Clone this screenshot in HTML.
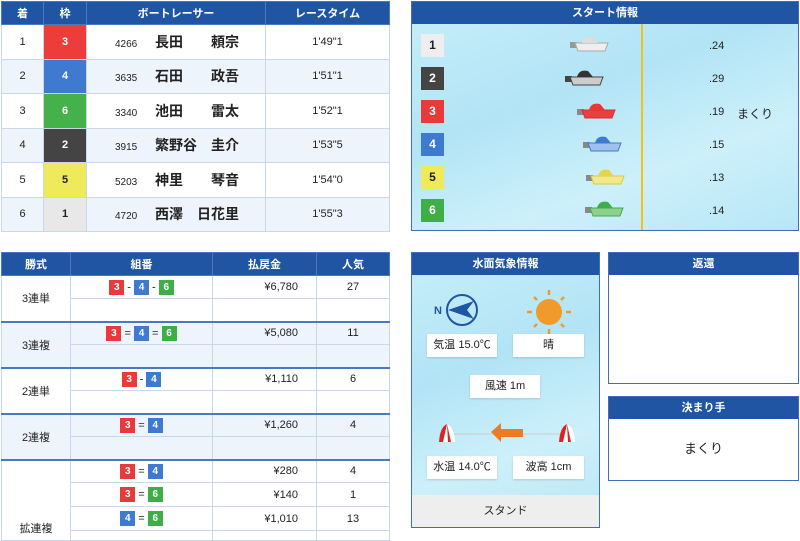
<!DOCTYPE html>
<html><head><meta charset="utf-8"><style>
*{margin:0;padding:0;box-sizing:border-box}
body{width:800px;height:530px;background:#fff;position:relative;overflow:hidden;font-family:"Liberation Sans","Noto Sans CJK JP",sans-serif;color:#222}
.a{position:absolute}
.hd{background:#1f55a3;color:#fff;font-weight:bold;font-size:11px;text-align:center;line-height:22px}
table{border-collapse:collapse;position:absolute;table-layout:fixed}
td,th{text-align:center;font-size:11px;border:1px solid #c9d7ea}
th{background:#1f55a3;color:#fff;border-color:#4a79c0;height:23px;font-size:11px}
.n{font-size:14px;font-weight:bold;font-family:"Noto Sans CJK JP",sans-serif}
.b{display:inline-block;width:15px;height:15px;line-height:15px;color:#fff;font-weight:bold;font-size:10px;text-align:center;vertical-align:middle}
.r{background:#e83a3a}.bl{background:#3d7ad0}.g{background:#3fae48}
.water{background:linear-gradient(160deg,#c7eef9,#b2e4f6 40%,#cdf0fa 70%,#b8e6f6)}
.sq{position:absolute;left:9px;width:23px;height:23px;font-weight:bold;font-size:12px;text-align:center;line-height:23px}
.t{position:absolute;left:297px;font-size:11px}
.box{position:absolute;background:#fff;font-size:11px;text-align:center;line-height:23px;height:23px;box-shadow:0 1px 2px rgba(0,0,0,.15)}
</style></head><body>

<table style="left:1px;top:1px;width:388px;border:1px solid #3f6eb5">
<colgroup><col style="width:42px"><col style="width:43px"><col style="width:179px"><col style="width:124px"></colgroup>
<tr><th>着</th><th>枠</th><th>ボートレーサー</th><th>レースタイム</th></tr>
<tr style="height:34.5px"><td>1</td><td style="background:#ec3c3c;color:#fff;font-weight:bold">3</td><td style="text-align:left;padding-left:28px"><span style="font-size:10px;display:inline-block;width:40px">4266</span><span class="n">長田　　頼宗</span></td><td>1'49"1</td></tr>
<tr style="height:34.5px;background:#eef4fc"><td>2</td><td style="background:#3d7ad0;color:#fff;font-weight:bold">4</td><td style="text-align:left;padding-left:28px"><span style="font-size:10px;display:inline-block;width:40px">3635</span><span class="n">石田　　政吾</span></td><td>1'51"1</td></tr>
<tr style="height:34.5px"><td>3</td><td style="background:#45b14a;color:#fff;font-weight:bold">6</td><td style="text-align:left;padding-left:28px"><span style="font-size:10px;display:inline-block;width:40px">3340</span><span class="n">池田　　雷太</span></td><td>1'52"1</td></tr>
<tr style="height:34.5px;background:#eef4fc"><td>4</td><td style="background:#444;color:#fff;font-weight:bold">2</td><td style="text-align:left;padding-left:28px"><span style="font-size:10px;display:inline-block;width:40px">3915</span><span class="n">繁野谷　圭介</span></td><td>1'53"5</td></tr>
<tr style="height:34.5px"><td>5</td><td style="background:#eeea5a;font-weight:bold">5</td><td style="text-align:left;padding-left:28px"><span style="font-size:10px;display:inline-block;width:40px">5203</span><span class="n">神里　　琴音</span></td><td>1'54"0</td></tr>
<tr style="height:34.5px;background:#eef4fc"><td>6</td><td style="background:#e8e8e8;font-weight:bold">1</td><td style="text-align:left;padding-left:28px"><span style="font-size:10px;display:inline-block;width:40px">4720</span><span class="n">西澤　日花里</span></td><td>1'55"3</td></tr>
</table>

<div class="a water" style="left:411px;top:1px;width:388px;height:230px;border:1px solid #3f6eb5">
<div class="hd" style="height:22px">スタート情報</div>
<div class="a" style="left:229px;top:22px;width:2px;height:206px;background:#f2c21c"></div>
<div class="sq" style="top:32px;background:#eee">1</div>
<div class="sq" style="top:65px;background:#444;color:#fff">2</div>
<div class="sq" style="top:98px;background:#e83a3a;color:#fff">3</div>
<div class="sq" style="top:131px;background:#3d7ad0;color:#fff">4</div>
<div class="sq" style="top:164px;background:#eeea5a">5</div>
<div class="sq" style="top:197px;background:#3fae48;color:#fff">6</div>
<div class="t" style="top:38px">.24</div>
<div class="t" style="top:71px">.29</div>
<div class="t" style="top:104px">.19</div><div class="a" style="left:325px;top:103px;font-size:12px">まくり</div>
<div class="t" style="top:137px">.15</div>
<div class="t" style="top:170px">.13</div>
<div class="t" style="top:203px">.14</div>
<svg class="a" style="left:0;top:0" width="388" height="230">
<g transform="translate(158,33)"><rect x="0" y="7" width="7" height="6" fill="#999"/><path d="M5 8 L38 8 L35 16 L8 16 Z" fill="#eee" stroke="#aaa"/><path d="M12 8 Q14 0 23 2 L28 8Z" fill="#ddd"/></g>
<g transform="translate(153,67)"><rect x="0" y="7" width="7" height="6" fill="#444"/><path d="M5 8 L38 8 L35 16 L8 16 Z" fill="#ccc" stroke="#444"/><path d="M12 8 Q14 0 23 2 L28 8Z" fill="#333"/></g>
<g transform="translate(165,100)"><rect x="0" y="7" width="7" height="6" fill="#888"/><path d="M5 8 L38 8 L35 16 L8 16 Z" fill="#e84040" stroke="#c33"/><path d="M12 8 Q14 0 23 2 L28 8Z" fill="#e33"/></g>
<g transform="translate(171,133)"><rect x="0" y="7" width="7" height="6" fill="#888"/><path d="M5 8 L38 8 L35 16 L8 16 Z" fill="#9fc0ea" stroke="#3d7ad0"/><path d="M12 8 Q14 0 23 2 L28 8Z" fill="#3d7ad0"/></g>
<g transform="translate(174,166)"><rect x="0" y="7" width="7" height="6" fill="#888"/><path d="M5 8 L38 8 L35 16 L8 16 Z" fill="#f2ea8a" stroke="#d8c84a"/><path d="M12 8 Q14 0 23 2 L28 8Z" fill="#e6d44a"/></g>
<g transform="translate(173,198)"><rect x="0" y="7" width="7" height="6" fill="#888"/><path d="M5 8 L38 8 L35 16 L8 16 Z" fill="#8fd08f" stroke="#3fae48"/><path d="M12 8 Q14 0 23 2 L28 8Z" fill="#3fae48"/></g>
</svg>
</div>

<table style="left:1px;top:252px;width:388px;border:1px solid #3f6eb5">
<colgroup><col style="width:69px"><col style="width:142px"><col style="width:104px"><col style="width:73px"></colgroup>
<tr><th style="height:22px">勝式</th><th>組番</th><th>払戻金</th><th>人気</th></tr>
<tr style="height:23px"><td rowspan="2">3連単</td><td><span class="b r">3</span> - <span class="b bl">4</span> - <span class="b g">6</span></td><td style="text-align:right;padding-right:18px">¥6,780</td><td>27</td></tr>
<tr style="height:23px"><td></td><td></td><td></td></tr>
<tr style="height:23px;background:#eef4fc;border-top:2px solid #4a79c0"><td rowspan="2">3連複</td><td><span class="b r">3</span> = <span class="b bl">4</span> = <span class="b g">6</span></td><td style="text-align:right;padding-right:18px">¥5,080</td><td>11</td></tr>
<tr style="height:23px;background:#eef4fc"><td></td><td></td><td></td></tr>
<tr style="height:23px;border-top:2px solid #4a79c0"><td rowspan="2">2連単</td><td><span class="b r">3</span> - <span class="b bl">4</span></td><td style="text-align:right;padding-right:18px">¥1,110</td><td>6</td></tr>
<tr style="height:23px"><td></td><td></td><td></td></tr>
<tr style="height:23px;background:#eef4fc;border-top:2px solid #4a79c0"><td rowspan="2">2連複</td><td><span class="b r">3</span> = <span class="b bl">4</span></td><td style="text-align:right;padding-right:18px">¥1,260</td><td>4</td></tr>
<tr style="height:23px;background:#eef4fc"><td></td><td></td><td></td></tr>
<tr style="height:23px;border-top:2px solid #4a79c0"><td rowspan="4" style="vertical-align:bottom;padding-bottom:4px">拡連複</td><td><span class="b r">3</span> = <span class="b bl">4</span></td><td style="text-align:right;padding-right:18px">¥280</td><td>4</td></tr>
<tr style="height:24px"><td><span class="b r">3</span> = <span class="b g">6</span></td><td style="text-align:right;padding-right:18px">¥140</td><td>1</td></tr>
<tr style="height:24px"><td><span class="b bl">4</span> = <span class="b g">6</span></td><td style="text-align:right;padding-right:18px">¥1,010</td><td>13</td></tr>
<tr style="height:10px"><td></td><td></td><td></td></tr>
</table>

<div class="a water" style="left:411px;top:252px;width:189px;height:276px;border:1px solid #3f6eb5">
<div class="hd" style="height:22px">水面気象情報</div>
<svg class="a" style="left:0;top:22px" width="187" height="230">
<text x="22" y="39" font-size="11" font-weight="bold" fill="#1f55a3" font-family="Liberation Sans">N</text>
<circle cx="50" cy="35" r="15" fill="none" stroke="#1f55a3" stroke-width="2"/>
<path d="M36 35 L62 26 L55 35 L62 44 Z" fill="#1f55a3"/>
<circle cx="137" cy="37" r="13" fill="#ef9a2a"/>
<g stroke="#ef9a2a" stroke-width="2.5">
<line x1="137" y1="15" x2="137" y2="20"/><line x1="137" y1="54" x2="137" y2="59"/>
<line x1="115" y1="37" x2="120" y2="37"/><line x1="154" y1="37" x2="159" y2="37"/>
<line x1="122" y1="22" x2="125" y2="25"/><line x1="149" y1="49" x2="152" y2="52"/>
<line x1="152" y1="22" x2="149" y2="25"/><line x1="122" y1="52" x2="125" y2="49"/>
</g>
<line x1="40" y1="159" x2="148" y2="159" stroke="#ccc" stroke-width="1"/>
<path d="M27 167 Q28 152 35 149 Q42 152 43 167 Z" fill="#fff"/><path d="M27 167 Q28 152 35 149 L31 167Z M35 149 L36 167 L39 167Z" fill="#d22"/>
<path d="M147 167 Q148 152 155 149 Q162 152 163 167 Z" fill="#fff"/><path d="M147 167 Q148 152 155 149 L151 167Z M155 149 L156 167 L159 167Z" fill="#d22"/>
<path d="M79 157 L89 148 L89 154 L111 154 L111 162 L89 162 L89 167 Z" fill="#ee7a22"/>
</svg>
<div class="box" style="left:15px;top:81px;width:70px">気温 15.0℃</div>
<div class="box" style="left:101px;top:81px;width:71px">晴</div>
<div class="box" style="left:58px;top:122px;width:70px">風速 1m</div>
<div class="box" style="left:15px;top:203px;width:70px">水温 14.0℃</div>
<div class="box" style="left:101px;top:203px;width:71px">波高 1cm</div>
<div class="a" style="left:0;bottom:0;width:187px;height:32px;background:#eee;text-align:center;line-height:32px;font-size:11px">スタンド</div>
</div>

<div class="a" style="left:608px;top:252px;width:191px;height:132px;border:1px solid #3f6eb5">
<div class="hd" style="height:22px">返還</div>
</div>
<div class="a" style="left:608px;top:396px;width:191px;height:85px;border:1px solid #3f6eb5">
<div class="hd" style="height:22px">決まり手</div>
<div style="text-align:center;font-size:13px;line-height:60px">まくり</div>
</div>
</body></html>
